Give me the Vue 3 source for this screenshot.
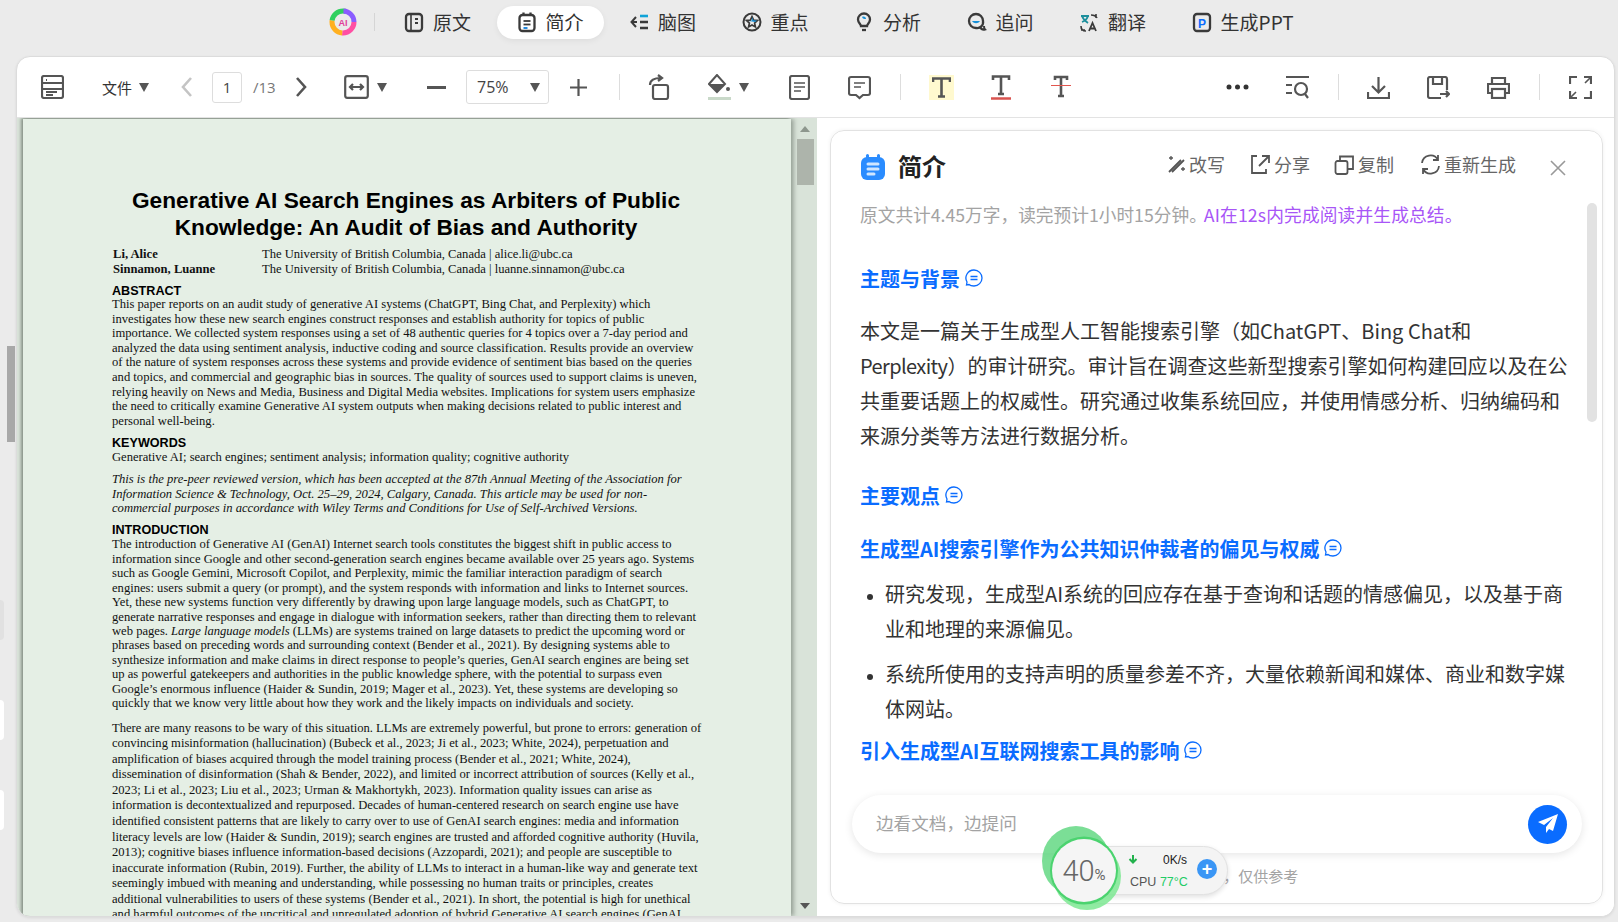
<template>
  <div class="app">
    <nav class="nav">
      <svg class="logo" width="28" height="28" viewBox="0 0 28 28">
        <circle cx="14" cy="14" r="11" fill="none" stroke="#ff4fa3" stroke-width="5" stroke-dasharray="18 60" />
        <circle cx="14" cy="14" r="11" fill="none" stroke="#ffb020" stroke-width="5" stroke-dasharray="18 60" stroke-dashoffset="-18" />
        <circle cx="14" cy="14" r="11" fill="none" stroke="#2fd05f" stroke-width="5" stroke-dasharray="18 60" stroke-dashoffset="-36" />
        <circle cx="14" cy="14" r="11" fill="none" stroke="#8a5cff" stroke-width="5" stroke-dasharray="18 60" stroke-dashoffset="-52" />
        <text x="14" y="17.5" text-anchor="middle" class="logo-txt">AI</text>
      </svg>
      <span class="nav-sep"></span>
      <div class="tabs">
        <div v-for="t in tabs" :key="t.name" class="tab" :class="{ active: t.active }">
          <svg width="20" height="22" viewBox="0 0 20 22" fill="none" stroke="#3a3a3a" stroke-width="2.3" v-html="t.icon"></svg>
          <span>{{ t.name }}</span>
        </div>
      </div>
    </nav>

    <main class="card">
      <div class="toolbar">
        <svg class="ic" width="23" height="24" viewBox="0 0 23 24"><rect x="1" y="1" width="21" height="22" rx="2" /><path d="M1 8h21M1 14h21M5 5h1M5 17h11M5 20h7" /></svg>
        <span class="file ml38">文件</span><i class="caret ml7"></i>
        <svg class="ic chev ml32 faint" width="11" height="20" viewBox="0 0 11 20"><path d="M10 1 2 10l8 9" /></svg>
        <span class="page-input ml20">1</span>
        <span class="page-total ml11">/13</span>
        <svg class="ic chev ml20" width="11" height="20" viewBox="0 0 11 20"><path d="m1 1 8 9-8 9" /></svg>
        <svg class="ic ml37" width="25" height="24" viewBox="0 0 25 24"><rect x="1.2" y="1.2" width="22.6" height="21.6" rx="2" /><path d="M6 12h13M9 9l-3 3 3 3M16 9l3 3-3 3" /></svg>
        <i class="caret ml8"></i>
        <span class="bar ml40"></span>
        <div class="zoom-select ml20"><span>75%</span><i class="caret"></i></div>
        <svg class="ic ml21" width="17" height="17" viewBox="0 0 17 17"><path d="M0 8.5h17M8.5 0v17" /></svg>
        <span class="tb-sep ml32"></span>
        <svg class="ic ml28" width="22" height="26" viewBox="0 0 22 26"><rect x="5" y="11" width="15" height="14" rx="2" /><path d="M2 11C2 6 6 4 13 4M10 1l4 3-4 3" /></svg>
        <svg class="ml38" width="23" height="26" viewBox="0 0 23 26"><path d="M9 1 1 10l8 8 8-8z" fill="none" stroke="#555" stroke-width="2" /><path d="M1 10h16l-8 8z" fill="#555" /><circle cx="20" cy="15" r="2" fill="#555" /><rect y="23" width="23" height="3" fill="#c9d9c9" /></svg>
        <i class="caret ml8"></i>
        <svg class="ic ml40" width="21" height="25" viewBox="0 0 21 25"><rect x="1" y="1" width="19" height="23" rx="2" /><path d="M5 8h11M5 12h11M5 16h7" stroke-width="1.5" /></svg>
        <svg class="ic ml38" width="23" height="25" viewBox="0 0 23 25"><path d="M3 2h17a2 2 0 0 1 2 2v14a2 2 0 0 1-2 2h-5l-3.500 3L8 20H3a2 2 0 0 1-2-2V4a2 2 0 0 1 2-2z" /><path d="M6 8h11M6 12h7" stroke-width="1.5" /></svg>
        <span class="tb-sep ml29"></span>
        <span class="t-box ml28">
          <svg class="ic t-ic" width="19" height="21" viewBox="0 0 19 21"><path d="M1 5V1.500h17V5M9.500 1.500v18M6 19.500h7" /></svg>
        </span>
        <svg class="ic t-ic ml37" width="20" height="25" viewBox="0 0 20 25"><path d="M2 5V1.500h16V5M10 1.500V19M7 19h6" /><path d="M0 23.500h20" stroke="#d9534f" stroke-width="2.500" /></svg>
        <svg class="ic t-ic ml40" width="20" height="24" viewBox="0 0 20 24"><path d="M4 5V2h12v3M10 2v19M7 21h6" /><path d="M0 10.500h20" stroke="#e2564f" stroke-width="1.200" /></svg>
        <svg class="mlauto" width="23" height="6" viewBox="0 0 23 6"><circle cx="3" cy="3" r="2.500" /><circle cx="11.500" cy="3" r="2.500" /><circle cx="20" cy="3" r="2.500" /></svg>
        <svg class="ic ml37" width="23" height="23" viewBox="0 0 23 23"><path d="M0 1h23M0 9h6M0 17h6" /><circle cx="15" cy="13" r="6" /><path d="m19 18 3 4" /></svg>
        <span class="tb-sep ml29"></span>
        <svg class="ic ml28" width="23" height="23" viewBox="0 0 23 23"><path d="M11.500 1v15M5 10l6.500 6.500L18 10M1 16v6h21v-6" /></svg>
        <svg class="ic ml37" width="23" height="23" viewBox="0 0 23 23"><path d="M14 22H3a2 2 0 0 1-2-2V3a2 2 0 0 1 2-2h15a2 2 0 0 1 2 2v11M6 1v7h9V1M13 18h9M19 15l3 3-3 3" /></svg>
        <svg class="ic ml37" width="23" height="23" viewBox="0 0 23 23"><path d="M5 8V2h13v6M5 17H1V8h21v9h-4" /><rect x="5" y="13" width="13" height="9" /></svg>
        <span class="tb-sep ml29"></span>
        <svg class="ic ml29" width="23" height="23" viewBox="0 0 23 23"><path d="M8 1H1v7M15 1h7v7M1 15v7h7M22 15v7h-7" /><path d="M16 7l5-5M2 21l5-5" stroke-width="1.600" /></svg>
      </div>

      <div class="split">
        <section class="viewer">
          <article class="paper">
            <h1>Generative AI Search Engines as Arbiters of Public<br>Knowledge: An Audit of Bias and Authority</h1>
            <div class="authors">
              <b>Li, Alice</b><span>The University of British Columbia, Canada | alice.li@ubc.ca</span>
              <b>Sinnamon, Luanne</b><span>The University of British Columbia, Canada | luanne.sinnamon@ubc.ca</span>
            </div>
            <h2 class="h-abs">ABSTRACT</h2>
            <p>This paper reports on an audit study of generative AI systems (ChatGPT, Bing Chat, and Perplexity) which<br>
investigates how these new search engines construct responses and establish authority for topics of public<br>
importance. We collected system responses using a set of 48 authentic queries for 4 topics over a 7-day period and<br>
analyzed the data using sentiment analysis, inductive coding and source classification. Results provide an overview<br>
of the nature of system responses across these systems and provide evidence of sentiment bias based on the queries<br>
and topics, and commercial and geographic bias in sources. The quality of sources used to support claims is uneven,<br>
relying heavily on News and Media, Business and Digital Media websites. Implications for system users emphasize<br>
the need to critically examine Generative AI system outputs when making decisions related to public interest and<br>
personal well-being.</p>
            <h2 class="h-key">KEYWORDS</h2>
            <p>Generative AI; search engines; sentiment analysis; information quality; cognitive authority</p>
            <p class="note"><em>This is the pre-peer reviewed version, which has been accepted at the 87th Annual Meeting of the Association for<br>
Information Science &amp; Technology, Oct. 25–29, 2024, Calgary, Canada. This article may be used for non-<br>
commercial purposes in accordance with Wiley Terms and Conditions for Use of Self-Archived Versions.</em></p>
            <h2>INTRODUCTION</h2>
            <p class="intro">The introduction of Generative AI (GenAI) Internet search tools constitutes the biggest shift in public access to<br>
information since Google and other second-generation search engines became available over 25 years ago. Systems<br>
such as Google Gemini, Microsoft Copilot, and Perplexity, mimic the familiar interaction paradigm of search<br>
engines: users submit a query (or prompt), and the system responds with information and links to Internet sources.<br>
Yet, these new systems function very differently by drawing upon large language models, such as ChatGPT, to<br>
generate narrative responses and engage in dialogue with information seekers, rather than directing them to relevant<br>
web pages. <em>Large language models</em> (LLMs) are systems trained on large datasets to predict the upcoming word or<br>
phrases based on preceding words and surrounding context (Bender et al., 2021). By designing systems able to<br>
synthesize information and make claims in direct response to people’s queries, GenAI search engines are being set<br>
up as powerful gatekeepers and authorities in the public knowledge sphere, with the potential to surpass even<br>
Google’s enormous influence (Haider &amp; Sundin, 2019; Mager et al., 2023). Yet, these systems are developing so<br>
quickly that we know very little about how they work and the likely impacts on individuals and society.</p>
            <p class="para2">There are many reasons to be wary of this situation. LLMs are extremely powerful, but prone to errors: generation of<br>
convincing misinformation (hallucination) (Bubeck et al., 2023; Ji et al., 2023; White, 2024), perpetuation and<br>
amplification of biases acquired through the model training process (Bender et al., 2021; White, 2024),<br>
dissemination of disinformation (Shah &amp; Bender, 2022), and limited or incorrect attribution of sources (Kelly et al.,<br>
2023; Li et al., 2023; Liu et al., 2023; Urman &amp; Makhortykh, 2023). Information quality issues can arise as<br>
information is decontextualized and repurposed. Decades of human-centered research on search engine use have<br>
identified consistent patterns that are likely to carry over to use of GenAI search engines: media and information<br>
literacy levels are low (Haider &amp; Sundin, 2019); search engines are trusted and afforded cognitive authority (Huvila,<br>
2013); cognitive biases influence information-based decisions (Azzopardi, 2021); and people are susceptible to<br>
inaccurate information (Rubin, 2019). Further, the ability of LLMs to interact in a human-like way and generate text<br>
seemingly imbued with meaning and understanding, while possessing no human traits or principles, creates<br>
additional vulnerabilities to users of these systems (Bender et al., 2021). In short, the potential is high for unethical<br>
and harmful outcomes of the uncritical and unregulated adoption of hybrid Generative AI search engines (GenAI</p>
          </article>
          <div class="pdf-scroll">
            <i class="arrow up"></i>
            <span class="thumb"></span>
            <i class="arrow down"></i>
          </div>
        </section>

        <aside class="side">
          <section class="panel">
            <header class="panel-head">
              <svg class="head-ic" width="24" height="26" viewBox="0 0 24 26"><rect y="3" width="24" height="23" rx="6" fill="#2a8cff" /><rect x="5" y="0" width="3" height="6" rx="1.500" fill="#2a8cff" /><rect x="16" y="0" width="3" height="6" rx="1.500" fill="#2a8cff" /><path d="M7 10h10M7 15h10M7 20h6" stroke="#cfe6ff" stroke-width="3" stroke-linecap="round" /></svg>
              <h3>简介</h3>
              <div class="actions">
                <span class="act act1"><svg class="ac" width="20" height="20" viewBox="0 0 20 20"><path d="M3 18 15 6M6 18 18 6" /><path d="M3 4h4M5 2v4M15 15h4M17 13v4" stroke-width="1.300" /></svg>改写</span>
                <span class="act act2"><svg class="ac" width="21" height="21" viewBox="0 0 21 21"><path d="M7 2H2v17h14v-4M9 12 19 2M12 2h7v7" /></svg>分享</span>
                <span class="act act3"><svg class="ac" width="21" height="21" viewBox="0 0 21 21"><rect x="1.500" y="7" width="12" height="13" rx="2" /><path d="M6 7V2.500h13V15h-5.500" /></svg>复制</span>
                <span class="act act4"><svg class="ac" width="21" height="21" viewBox="0 0 21 21"><path d="M2 9a8.500 8.500 0 0 1 16-3M19 12a8.500 8.500 0 0 1-16 3M18 1v5h-5M3 20v-5h5" /></svg>重新生成</span>
              </div>
              <svg class="close" width="16" height="16" viewBox="0 0 16 16"><path d="m1 1 14 14M15 1 1 15" /></svg>
            </header>

            <div class="summary">
              <p class="stat">原文共计4.45万字，读完预计1小时15分钟。<span>AI在12s内完成阅读并生成总结。</span></p>
              <h4 class="first">主题与背景<svg class="bubble" width="18" height="18" viewBox="0 0 18 18"><path d="M9 1a8 8 0 0 1 0 16c-2 0-4-.500-5-1.500L1.500 16l.500-3A8 8 0 0 1 9 1z" /><path d="M5.500 7.500h7M5.500 10.500h7" /></svg></h4>
              <p class="body">本文是一篇关于生成型人工智能搜索引擎（如ChatGPT、Bing Chat和<br><span class="tight">Perplexity</span>）的审计研究。审计旨在调查这些新型搜索引擎如何构建回应以及在公<br>共重要话题上的权威性。研究通过收集系统回应，并使用情感分析、归纳编码和<br>来源分类等方法进行数据分析。</p>
              <h4 class="second">主要观点<svg class="bubble" width="18" height="18" viewBox="0 0 18 18"><path d="M9 1a8 8 0 0 1 0 16c-2 0-4-.500-5-1.500L1.500 16l.500-3A8 8 0 0 1 9 1z" /><path d="M5.500 7.500h7M5.500 10.500h7" /></svg></h4>
              <h4 class="third">生成型AI搜索引擎作为公共知识仲裁者的偏见与权威<svg class="bubble" width="18" height="18" viewBox="0 0 18 18"><path d="M9 1a8 8 0 0 1 0 16c-2 0-4-.500-5-1.500L1.500 16l.500-3A8 8 0 0 1 9 1z" /><path d="M5.500 7.500h7M5.500 10.500h7" /></svg></h4>
              <ul>
                <li>研究发现，生成型AI系统的回应存在基于查询和话题的情感偏见，以及基于商<br>业和地理的来源偏见。</li>
                <li>系统所使用的支持声明的质量参差不齐，大量依赖新闻和媒体、商业和数字媒<br>体网站。</li>
              </ul>
              <h4 class="fourth">引入生成型AI互联网搜索工具的影响<svg class="bubble" width="18" height="18" viewBox="0 0 18 18"><path d="M9 1a8 8 0 0 1 0 16c-2 0-4-.500-5-1.500L1.500 16l.500-3A8 8 0 0 1 9 1z" /><path d="M5.500 7.500h7M5.500 10.500h7" /></svg></h4>
              <span class="side-scroll"></span>
            </div>

            <div class="ask">
              <span>边看文档，边提问</span>
              <button class="send">
                <svg width="22" height="22" viewBox="0 0 22 22"><path d="M21 1 1 9l6 3 9-7-7 9v6l3-4 4 2z" fill="#fff" /></svg>
              </button>
            </div>
            <p class="foot">内容由AI生成，仅供参考</p>
          </section>
        </aside>
      </div>
    </main>

    <div class="edge edge1"></div>
    <div class="edge edge2"></div>
    <div class="edge edge3"></div>
    <div class="edge-bar"></div>

    <div class="monitor">
      <div class="mon-pill">
        <svg class="mon-down" width="10" height="10" viewBox="0 0 10 10"><path d="M5 1v7M1.500 5 5 8.500 8.500 5" fill="none" stroke="#22b14c" stroke-width="2" /></svg>
        <span class="speed">0K/s</span>
        <div class="mon-cpu">CPU <b>77°C</b></div>
        <span class="mon-plus">+</span>
      </div>
      <svg class="mon-blob" width="84" height="90" viewBox="0 0 84 90">
        <ellipse cx="36" cy="37" rx="34" ry="35" fill="#5ad67c" opacity="0.8" />
        <ellipse cx="47" cy="52" rx="34" ry="34" fill="#7ce892" opacity="0.85" />
        <circle cx="44" cy="46.500" r="34" fill="#4bd36f" />
      </svg>
      <div class="mon-ring"><span>40</span><small>%</small></div>
    </div>
  </div>
</template>

<script setup>
const tabs = [
  { name: '原文', icon: '<rect x="2" y="3" width="16" height="17" rx="3"/><path d="M7 3v17" stroke-width="1.600"/><path d="M11 8h3M11 12h3" stroke-width="2"/>' },
  { name: '简介', active: true, icon: '<rect x="2.500" y="4" width="15" height="16" rx="3"/><path d="M6.500 1.500v3M13.500 1.500v3" /><path d="M6.500 10h7" stroke-width="1.800"/><path d="M6.500 13.500h7" stroke-width="1.800"/><path d="M6.500 17h4" stroke="#0a7ad8" stroke-width="1.800"/>' },
  { name: '脑图', icon: '<path d="M7 6 2.500 11 7 16M3 11h5" stroke-width="2"/><path d="M11 5h8" stroke="#0fa3d8" stroke-width="2.600"/><path d="M11 11h8M11 17h8" stroke-width="2.600"/>' },
  { name: '重点', icon: '<circle cx="10" cy="11" r="8.500" stroke-width="2"/><path d="m10 5.500 1.600 3.600 3.900.4-2.900 2.600.8 3.800-3.400-2-3.400 2 .8-3.800-2.900-2.600 3.900-.4z" stroke-width="1.700"/><path d="m10 6 1.400 3.200 3.600.4-2 1.400-6-1 3-.6z" fill="#1690d8" stroke="none"/>' },
  { name: '分析', icon: '<path d="M7 15c0-2-3-3-3-6.500a6 6 0 0 1 12 0c0 3.500-3 4.500-3 6.500z"/><path d="M8 19h4" /><path d="M8 6c2-1 4 0 4 2-2 0-3 0-4-2z" fill="#1690d8" stroke="none"/>' },
  { name: '追问', icon: '<path d="M9 3a7 7 0 0 1 7 7 6 6 0 0 1-7 7 7 7 0 0 1 0-14z"/><path d="M13 16c1 2 3 3 5 2.500-1-1-1-2-1-3.500" stroke-width="2"/><path d="M5 10c2 3 6 3 8 0z" fill="#1690d8" stroke="none"/>' },
  { name: '翻译', icon: '<path d="M2 5h8M3 11c3-1 5-3 6-6M3 5c1 3 3 5 6 7" stroke-width="1.800" stroke="#1d8f9c"/><path d="M12 4c3 0 5 1 6 3M17 3v4M2 15c0 3 2 5 5 5M2 19h4" stroke-width="1.600"/><path d="m10 20 3.500-8 3.500 8M11.300 17.500h4.400" stroke-width="1.800"/>' },
  { name: '生成PPT', icon: '<rect x="2" y="3" width="16" height="17" rx="3"/><text x="10" y="16.500" text-anchor="middle" font-family="Liberation Sans" font-weight="700" font-size="12" fill="#0a6cff" stroke="none">P</text>' },
]
</script>

<style>
html, body {
  margin: 0;
  overflow: hidden;
  background: #ebebeb;
}
</style>

<style scoped>
.app {
  position: relative;
  width: 1618px;
  height: 922px;
  display: flex;
  flex-direction: column;
  overflow: hidden;
  background: #ebebeb;
  font-family: "Noto Sans CJK SC", "Noto Sans", sans-serif;
  color: #333;
}

.nav {
  height: 56px;
  flex: none;
  box-sizing: border-box;
  padding: 6px 0 0 329px;
  display: flex;
  align-items: flex-start;
}
.logo { margin-top: 2px; }
.logo-txt {
  font: bold 9px "Liberation Sans", sans-serif;
  fill: #e0409a;
}
.nav-sep {
  width: 1px;
  height: 18px;
  margin: 7px 9px 0 17px;
  background: #d5d5d5;
}
.tabs {
  display: flex;
  gap: 5.500px;
}
.tab {
  height: 33px;
  box-sizing: border-box;
  padding: 0 20px 2px;
  border-radius: 17px;
  display: flex;
  align-items: center;
  gap: 9px;
  font-size: 19px;
  color: #333;
}
.tab.active {
  background: #fff;
  box-shadow: 0 2px 6px rgba(0, 0, 0, 0.06);
}

.card {
  flex: none;
  width: 1599px;
  height: 861px;
  margin-left: 16px;
  box-sizing: border-box;
  border: 1px solid #dcdcdc;
  border-radius: 14px;
  background: #fff;
  display: flex;
  flex-direction: column;
  overflow: hidden;
  box-shadow: 0 1px 3px rgba(0, 0, 0, 0.08);
}

.toolbar {
  height: 61px;
  flex: none;
  box-sizing: border-box;
  padding: 0 22px 0 24px;
  display: flex;
  align-items: center;
  border-bottom: 1px solid #e3e3e3;
  color: #555;
}
.ic {
  flex: none;
  fill: none;
  stroke: #555;
  stroke-width: 2.2;
}
.t-ic { stroke-width: 2.6; }
.chev { stroke-width: 2.6; }
.faint { stroke: #c4c4c4; }
.mlauto { margin-left: auto; fill: #333; flex: none; }
.ml7 { margin-left: 7px; }
.ml8 { margin-left: 8px; }
.ml11 { margin-left: 11px; }
.ml20 { margin-left: 20px; }
.ml21 { margin-left: 21px; }
.ml28 { margin-left: 28px; }
.ml29 { margin-left: 29px; }
.ml32 { margin-left: 32px; }
.ml37 { margin-left: 37px; }
.ml38 { margin-left: 38px; }
.ml40 { margin-left: 40px; }
.file {
  font-size: 15px;
  width: 30px;
  color: #333;
}
.caret {
  flex: none;
  width: 0;
  height: 0;
  border-left: 5.500px solid transparent;
  border-right: 5.500px solid transparent;
  border-top: 9px solid #555;
}
.page-input {
  width: 30px;
  height: 31px;
  box-sizing: border-box;
  border: 1px solid #ddd;
  border-radius: 3px;
  font: 15px/29px "Open Sans", sans-serif;
  text-align: center;
  color: #444;
}
.page-total {
  width: 23px;
  font: 15px "Open Sans", sans-serif;
  color: #777;
}
.bar {
  width: 19px;
  height: 3px;
  background: #555;
}
.zoom-select {
  width: 83px;
  height: 34px;
  box-sizing: border-box;
  border: 1px solid #ddd;
  border-radius: 3px;
  padding: 0 8px 0 10px;
  display: flex;
  align-items: center;
  justify-content: space-between;
  font: 16px "Open Sans", sans-serif;
  color: #444;
}
.tb-sep {
  flex: none;
  width: 1px;
  height: 26px;
  background: #ddd;
}
.t-box {
  width: 25px;
  height: 25px;
  background: #fff9cf;
  display: flex;
  align-items: center;
  justify-content: center;
}

.split {
  flex: 1;
  min-height: 0;
  display: flex;
}
.viewer {
  width: 800px;
  flex: none;
  box-sizing: border-box;
  padding: 1px 0 0 6px;
  background: #d9e3d9;
  display: flex;
  overflow: hidden;
}
.paper {
  width: 768px;
  flex: none;
  box-sizing: border-box;
  padding: 68px 0 0 89px;
  background: #e5efe5;
  box-shadow: -2px -1px 3px rgba(70, 80, 70, 0.55), 3px 0 4px rgba(70, 80, 70, 0.4);
  overflow: hidden;
  font: 12.6px/14.6px "Liberation Serif", serif;
  color: #111;
  white-space: nowrap;
}
.paper h1 {
  margin: 0;
  width: 588px;
  text-align: center;
  font: bold 22.7px/27px "Liberation Sans", sans-serif;
  color: #000;
}
.authors {
  margin: 6px 0 0 1px;
  display: grid;
  grid-template-columns: 149px 1fr;
  line-height: 15px;
}
.paper h2 {
  margin: 7px 0 0;
  font: bold 12.6px/14.6px "Liberation Sans", sans-serif;
  color: #000;
}
.paper h2.h-abs {
  margin-top: 8px;
  line-height: 12px;
}
.paper h2.h-key {
  margin-top: 8px;
  line-height: 14px;
}
.paper p { margin: 0; }
.paper p.note { margin-top: 7px; }
.paper p.intro { line-height: 14.450px; }
.paper p.para2 {
  margin-top: 10px;
  line-height: 15.550px;
}

.pdf-scroll {
  flex: 1;
  position: relative;
}
.arrow {
  position: absolute;
  left: 9px;
  width: 0;
  height: 0;
  border-left: 5px solid transparent;
  border-right: 5px solid transparent;
}
.arrow.up { top: 7px; border-bottom: 6px solid #8d968d; }
.arrow.down { bottom: 7px; border-top: 6px solid #555; }
.thumb {
  position: absolute;
  top: 20px;
  left: 6px;
  width: 17px;
  height: 46px;
  background: #adb4ab;
}

.side {
  flex: 1;
  min-width: 0;
  box-sizing: border-box;
  padding: 12px 11px 12px 13px;
  background: #fff;
}
.panel {
  height: 100%;
  position: relative;
  box-sizing: border-box;
  border: 1px solid #e2e2e2;
  border-radius: 14px;
  display: flex;
  flex-direction: column;
  box-shadow: 0 0 4px rgba(0, 0, 0, 0.06);
}
.panel-head {
  flex: none;
  height: 70px;
  box-sizing: border-box;
  padding: 0 0 2px 30px;
  display: flex;
  align-items: center;
}
.head-ic { margin-top: 4px; }
.panel-head h3 {
  margin: 0 0 0 13px;
  font-size: 24px;
  font-weight: 700;
  color: #222;
}
.actions {
  position: absolute;
  top: 20px;
  left: 335px;
  display: flex;
  color: #666;
  font-size: 18px;
}
.act {
  display: flex;
  align-items: center;
  gap: 3px;
}
.act2 { margin-left: 25px; }
.act3 { margin-left: 24px; }
.act4 { margin-left: 26px; }
.ac {
  fill: none;
  stroke: #555;
  stroke-width: 1.800;
}
.close {
  position: absolute;
  top: 29px;
  right: 36px;
  fill: none;
  stroke: #999;
  stroke-width: 1.600;
}

.summary {
  flex: 1;
  min-height: 0;
  position: relative;
  box-sizing: border-box;
  padding-left: 29px;
  overflow: hidden;
  white-space: nowrap;
}
.stat {
  margin: 0;
  font-size: 17.700px;
  line-height: 26px;
  color: #a3a3a3;
}
.stat span {
  margin-left: -3px;
  letter-spacing: 0.150px;
  color: #a855f7;
}
.summary h4 {
  margin: 0;
  display: flex;
  align-items: center;
  gap: 5px;
  font-size: 20px;
  line-height: 30px;
  font-weight: 700;
  color: #0a6cff;
}
.bubble {
  fill: none;
  stroke: #0a6cff;
  stroke-width: 1.300;
  margin-bottom: 3px;
}
h4.first { margin-top: 37px; }
.body {
  margin: 19px 0 0;
  font-size: 20px;
  line-height: 35px;
  color: #333;
}
.tight { letter-spacing: -0.600px; }
h4.second { margin-top: 28px; }
h4.third { margin-top: 23px; }
.summary ul {
  margin: 12px 0 0;
  padding: 0 0 0 25px;
  font-size: 20px;
  line-height: 35px;
}
.summary li { margin-bottom: 10px; }
.summary li::marker { font-size: 15px; }
h4.fourth { margin-top: 8px; }
.side-scroll {
  position: absolute;
  top: 2px;
  right: 5px;
  width: 10px;
  height: 219px;
  border-radius: 5px;
  background: #e2e2e2;
}

.ask {
  flex: none;
  height: 58px;
  margin: 0 20px 0 21px;
  box-sizing: border-box;
  border-radius: 29px;
  padding: 0 15px 0 24px;
  background: #fff;
  box-shadow: 0 2px 8px rgba(0, 0, 0, 0.1);
  display: flex;
  align-items: center;
  justify-content: space-between;
  font-size: 17.600px;
  color: #a3a3a3;
}
.ask span { margin-bottom: 3px; }
.send {
  width: 39px;
  height: 39px;
  padding: 0;
  border: none;
  border-radius: 50%;
  background: #0a6cff;
  display: flex;
  align-items: center;
  justify-content: center;
}
.foot {
  flex: none;
  margin: 0;
  height: 50px;
  text-align: center;
  font-size: 15px;
  line-height: 46px;
  color: #a3a3a3;
}

.edge {
  position: absolute;
  left: 0;
  width: 4px;
  height: 40px;
  border-radius: 0 4px 4px 0;
  background: #fff;
}
.edge1 { top: 600px; background: #e1e1e1; }
.edge2 { top: 700px; }
.edge3 { top: 790px; }
.edge-bar {
  position: absolute;
  left: 7px;
  top: 346px;
  width: 8px;
  height: 96px;
  background: #a8a8a8;
}

.monitor {
  position: absolute;
  left: 1040px;
  top: 824px;
  width: 188px;
  height: 90px;
}
.mon-pill {
  position: absolute;
  left: 44px;
  top: 22px;
  width: 144px;
  height: 49px;
  box-sizing: border-box;
  border-radius: 25px;
  background: #f4f4f4;
  border: 1px solid #e2e2e2;
  box-shadow: 0 2px 5px rgba(0, 0, 0, 0.12);
  font: 12px "Liberation Sans", sans-serif;
}
.mon-down {
  position: absolute;
  left: 43px;
  top: 7px;
}
.speed {
  position: absolute;
  left: 78px;
  top: 6px;
  color: #222;
}
.mon-cpu {
  position: absolute;
  left: 45px;
  top: 28px;
  font-size: 12.500px;
  color: #555;
}
.mon-cpu b {
  font-weight: 400;
  color: #22cc66;
}
.mon-plus {
  position: absolute;
  right: 10px;
  top: 12px;
  width: 20px;
  height: 20px;
  border-radius: 50%;
  background: #3a96f5;
  color: #fff;
  font: bold 18px/20px "Liberation Sans", sans-serif;
  text-align: center;
}
.mon-blob {
  position: absolute;
  left: 0;
  top: 0;
}
.mon-ring {
  position: absolute;
  left: 12px;
  top: 15px;
  width: 64px;
  height: 63px;
  border-radius: 50%;
  background: #f5f5f5;
  display: flex;
  align-items: center;
  justify-content: center;
  font: 300 29px Roboto, "Liberation Sans", sans-serif;
  color: #666;
}
.mon-ring small {
  font-size: 15px;
  font-weight: 400;
  margin-top: 8px;
}
</style>
